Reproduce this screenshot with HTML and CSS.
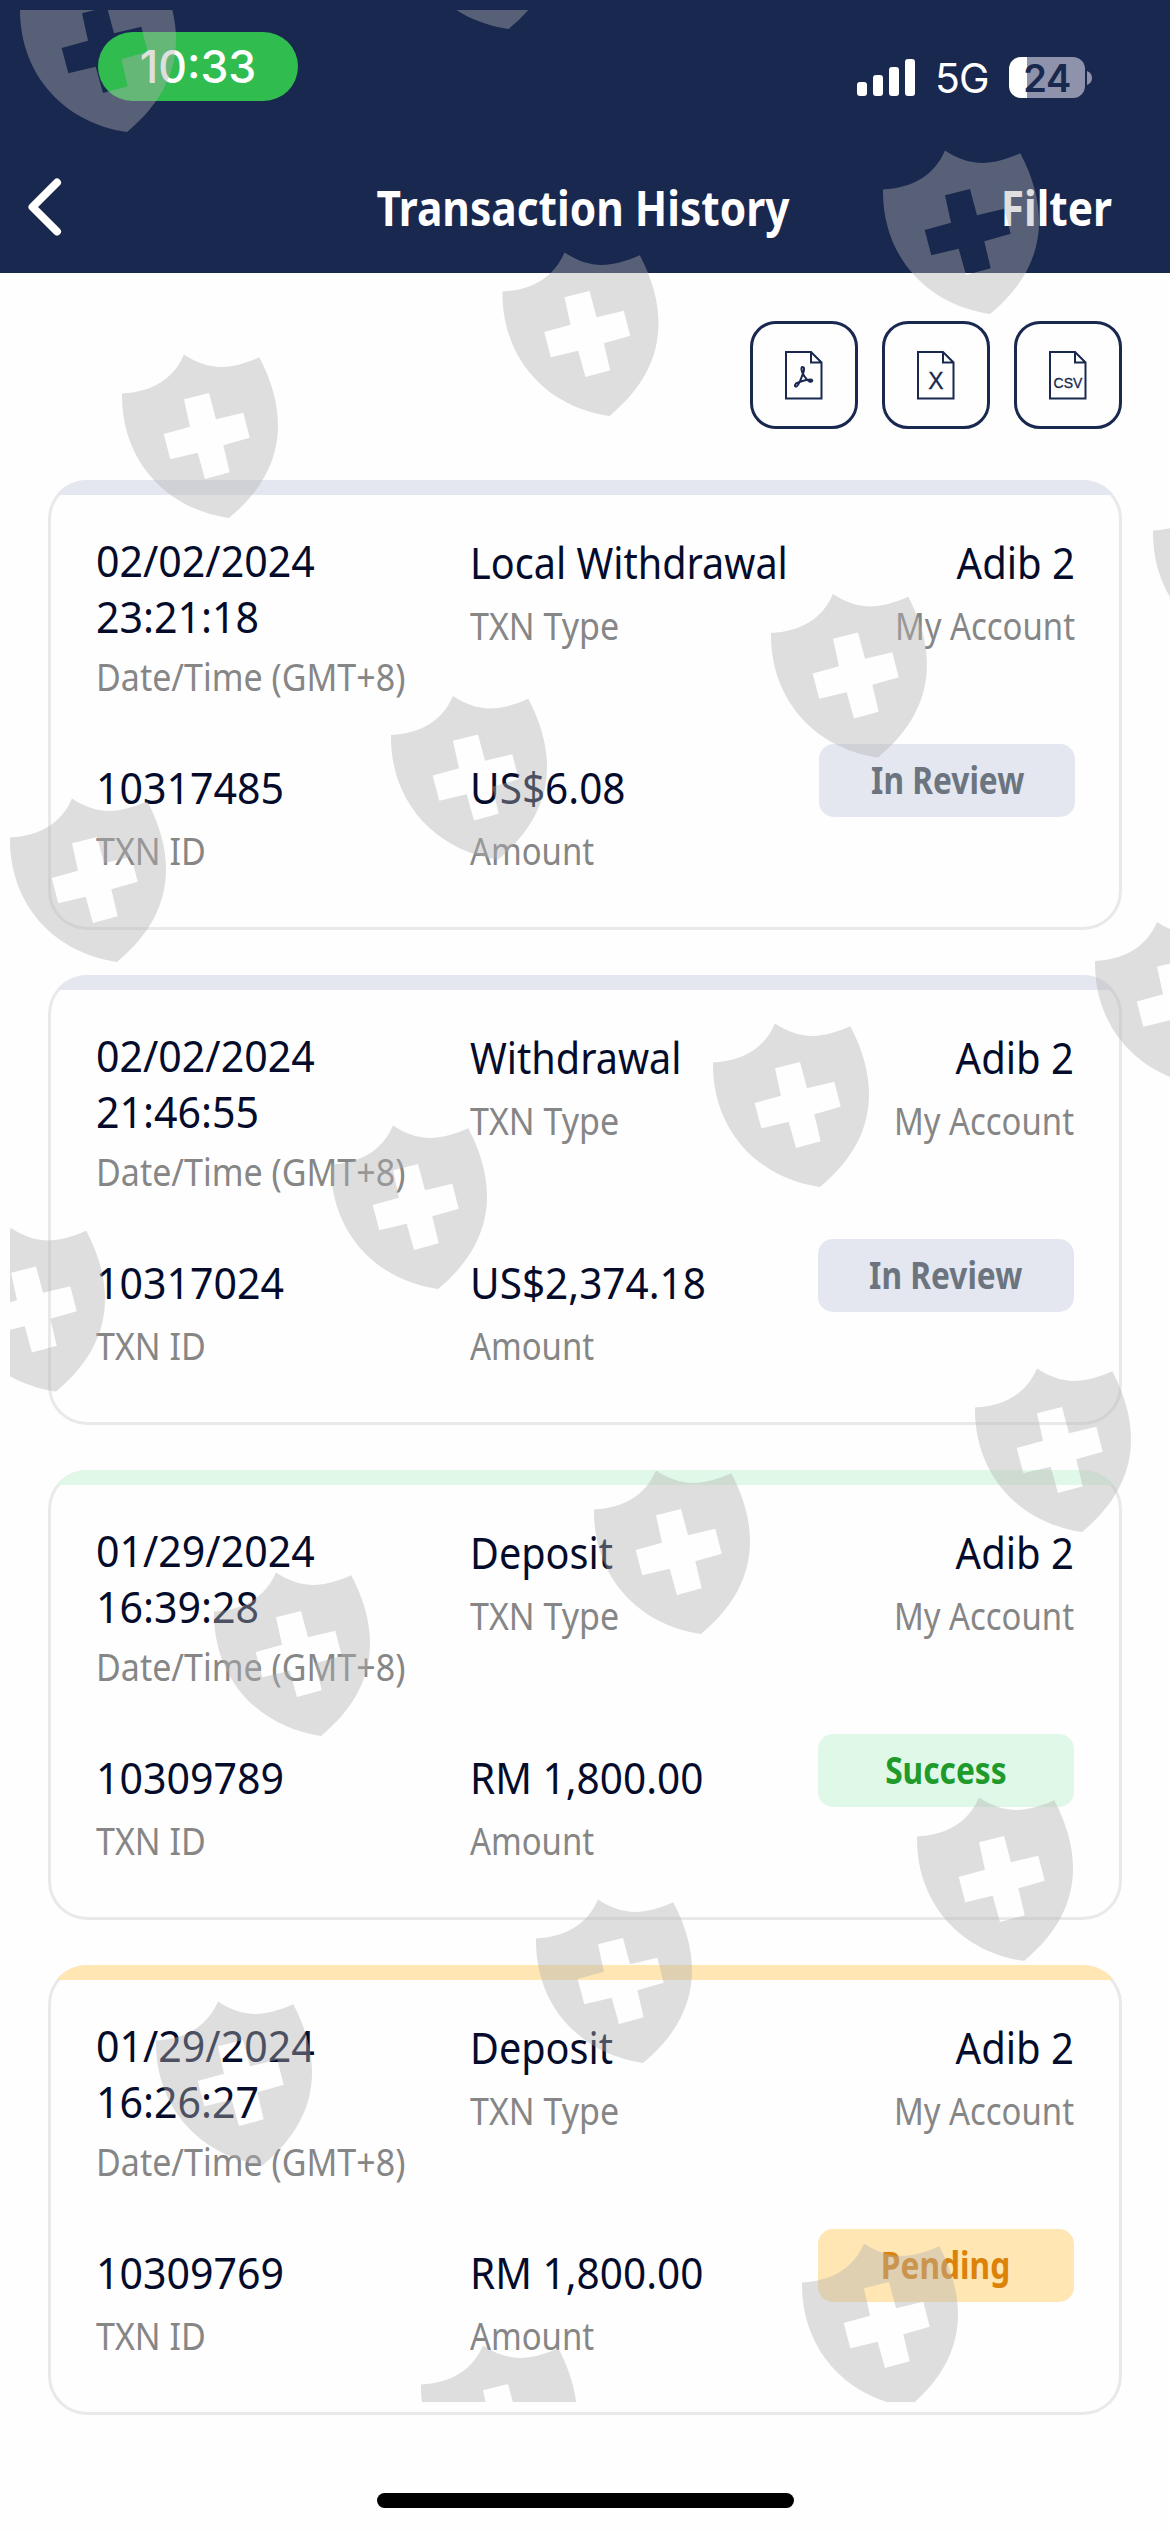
FILE: index.html
```html
<!DOCTYPE html>
<html lang="en">
<head>
    <meta charset="UTF-8">
    <meta name="viewport" content="width=device-width, initial-scale=1.0">
    <title>Transaction History</title>
    <link rel="stylesheet" href="styles.css">
</head>
<body>
    <header class="header">
        <div class="status-bar">
            <div class="time"><span>10:33</span></div>
            <div class="status-icons">
                <svg class="signal" width="58" height="37" viewBox="0 0 58 37" fill="#fff">
                    <rect x="0" y="23" width="10" height="14" rx="3"/>
                    <rect x="16" y="16" width="10" height="21" rx="3"/>
                    <rect x="32" y="8" width="10" height="29" rx="3"/>
                    <rect x="48" y="0" width="10" height="37" rx="3"/>
                </svg>
                <span class="network">5G</span>
                <div class="battery">24</div>
                <svg class="battery-tip" width="5" height="14" viewBox="0 0 5 14"><path d="M0 0Q5 2 5 7Q5 12 0 14Z" fill="#8e93ab"/></svg>
            </div>
        </div>
        <nav class="nav-bar">
            <svg class="back" width="36" height="60" viewBox="0 0 36 60" fill="none" stroke="#fff" stroke-width="8" stroke-linecap="round" stroke-linejoin="round">
                <path d="M30 5.500L5.500 30L30 54.500"/>
            </svg>
            <h1>Transaction History</h1>
            <span class="filter">Filter</span>
        </nav>
    </header>

    <main class="content">
        <div class="exports">
            <button class="export-btn">
                <svg width="38" height="49" viewBox="0 0 38 49" fill="none" stroke="#19284f" stroke-width="2">
                    <path d="M1 1H26L36.500 11.500V47.500H1ZM26 1V11.500H36.500"/>
                    <path d="M17.500 16C19.500 16 19.500 19 18 22.500C16 28 13.500 35 11.500 35.500C9 36 9.500 32.500 13 31.500C17 30 23 28.500 26 28.500C28.500 29 27 31.500 24.500 30.500C20.500 28.500 17 22 16.500 18.500C16.300 17 16.700 16 17.500 16Z"/>
                </svg>
            </button>
            <button class="export-btn">
                <svg width="38" height="49" viewBox="0 0 38 49" fill="none" stroke="#19284f" stroke-width="2">
                    <path d="M1 1H26L36.500 11.500V47.500H1ZM26 1V11.500H36.500"/>
                    <text class="x-text" x="19" y="37.500" text-anchor="middle">X</text>
                </svg>
            </button>
            <button class="export-btn">
                <svg width="38" height="49" viewBox="0 0 38 49" fill="none" stroke="#19284f" stroke-width="2">
                    <path d="M1 1H26L36.500 11.500V47.500H1ZM26 1V11.500H36.500"/>
                    <text class="csv-text" x="19" y="37" text-anchor="middle">CSV</text>
                </svg>
            </button>
        </div>

        <section class="card review">
            <div class="bar"></div>
            <div class="card-body">
                <div class="cell date"><div class="value">02/02/2024<br>23:21:18</div><div class="label">Date/Time (GMT+8)</div></div>
                <div class="cell type"><div class="value">Local Withdrawal</div><div class="label">TXN Type</div></div>
                <div class="cell account"><div class="value">Adib 2</div><div class="label">My Account</div></div>
                <div class="cell"><div class="value">10317485</div><div class="label">TXN ID</div></div>
                <div class="cell amount"><div class="value">US$6.08</div><div class="label">Amount</div></div>
                <div class="badge"><span>In Review</span></div>
            </div>
        </section>

        <section class="card review">
            <div class="bar"></div>
            <div class="card-body">
                <div class="cell date"><div class="value">02/02/2024<br>21:46:55</div><div class="label">Date/Time (GMT+8)</div></div>
                <div class="cell type"><div class="value">Withdrawal</div><div class="label">TXN Type</div></div>
                <div class="cell account"><div class="value">Adib 2</div><div class="label">My Account</div></div>
                <div class="cell"><div class="value">10317024</div><div class="label">TXN ID</div></div>
                <div class="cell amount"><div class="value">US$2,374.18</div><div class="label">Amount</div></div>
                <div class="badge"><span>In Review</span></div>
            </div>
        </section>

        <section class="card success">
            <div class="bar"></div>
            <div class="card-body">
                <div class="cell date"><div class="value">01/29/2024<br>16:39:28</div><div class="label">Date/Time (GMT+8)</div></div>
                <div class="cell type"><div class="value">Deposit</div><div class="label">TXN Type</div></div>
                <div class="cell account"><div class="value">Adib 2</div><div class="label">My Account</div></div>
                <div class="cell"><div class="value">10309789</div><div class="label">TXN ID</div></div>
                <div class="cell amount"><div class="value">RM 1,800.00</div><div class="label">Amount</div></div>
                <div class="badge"><span>Success</span></div>
            </div>
        </section>

        <section class="card pending">
            <div class="bar"></div>
            <div class="card-body">
                <div class="cell date"><div class="value">01/29/2024<br>16:26:27</div><div class="label">Date/Time (GMT+8)</div></div>
                <div class="cell type"><div class="value">Deposit</div><div class="label">TXN Type</div></div>
                <div class="cell account"><div class="value">Adib 2</div><div class="label">My Account</div></div>
                <div class="cell"><div class="value">10309769</div><div class="label">TXN ID</div></div>
                <div class="cell amount"><div class="value">RM 1,800.00</div><div class="label">Amount</div></div>
                <div class="badge"><span>Pending</span></div>
            </div>
        </section>
    </main>

    <div class="home-indicator"></div>

    <!-- shield watermark over the whole screen -->
    <svg class="watermark" viewBox="10 10 1160 2392">
        <defs>
            <path id="shield" fill-rule="evenodd" d="M22 63.500C51 62 73 50 84 24.500C108 40 128 41 159.300 27.300C190 86 185 142 129 188C66 179 21 130 22 63.500ZM84 69.300L109 63L116 89.300L143.300 82.700L149.700 107.700L123.300 115.300L129.700 142.300L105 149L97.700 122.700L70.300 129.300L63.700 104L90 96.700Z"/>
        </defs>
        <use href="#shield" x="-2" y="-56"/>
        <use href="#shield" x="379.500" y="-159"/>
        <use href="#shield" x="861" y="126"/>
        <use href="#shield" x="480.500" y="228"/>
        <use href="#shield" x="100" y="330"/>
        <use href="#shield" x="1131" y="467"/>
        <use href="#shield" x="749" y="569.500"/>
        <use href="#shield" x="369" y="671.500"/>
        <use href="#shield" x="-12" y="774"/>
        <use href="#shield" x="1073" y="897.500"/>
        <use href="#shield" x="691" y="999"/>
        <use href="#shield" x="309" y="1101"/>
        <use href="#shield" x="-73" y="1203.500"/>
        <use href="#shield" x="953" y="1344"/>
        <use href="#shield" x="572" y="1446"/>
        <use href="#shield" x="192" y="1548"/>
        <use href="#shield" x="895" y="1773"/>
        <use href="#shield" x="514" y="1875"/>
        <use href="#shield" x="134" y="1977"/>
        <use href="#shield" x="780" y="2219"/>
        <use href="#shield" x="399" y="2321"/>
    </svg>
</body>
</html>
```

FILE: styles.css
```css
* {
    box-sizing: border-box;
}

body {
    margin: 0;
    position: relative;
    width: 1170px;
    height: 2532px;
    overflow: hidden;
    background: #fefefe;
    font-family: 'Noto Sans', sans-serif;
    color: #050c2b;
    display: flex;
    flex-direction: column;
}

.header {
    height: 273px;
    background: #19284f;
    color: #fff;
}

.status-bar {
    height: 143px;
    padding: 32px 78px 0 98px;
    display: flex;
    justify-content: space-between;
    align-items: flex-start;
    font-family: Inter, sans-serif;
}

.time {
    width: 200px;
    height: 69px;
    border-radius: 35px;
    background: #30bc4f;
    font-size: 44.5px;
    line-height: 70px;
    font-weight: 500;
    text-align: center;
}

.status-icons {
    display: flex;
    align-items: center;
    margin-top: 25px;
    height: 41px;
}

.network {
    width: 56px;
    margin: 2px 18px 0 20px;
    font-size: 41px;
    line-height: 41px;
    letter-spacing: -1px;
}

.battery {
    width: 76px;
    height: 41px;
    border-radius: 12px;
    background: linear-gradient(90deg, #fff 18px, #8e93ab 18px);
    color: #19284f;
    font-size: 38px;
    line-height: 42px;
    font-weight: 600;
    text-align: center;
    letter-spacing: -0.5px;
}

.battery-tip {
    margin-left: 2px;
}

.nav-bar {
    height: 130px;
    padding: 0 58px 2px 27px;
    display: grid;
    grid-template-columns: 200px 1fr 200px;
    align-items: center;
    font-size: 49px;
    font-weight: 700;
}

.nav-bar h1 {
    margin: 0;
    padding-left: 31px;
    font-size: inherit;
    text-align: center;
    white-space: nowrap;
    transform: scaleX(0.866);
}

.filter {
    text-align: right;
    transform: scaleX(0.866);
    transform-origin: right;
}

.content {
    padding: 48px 48px 0;
    display: flex;
    flex-direction: column;
    gap: 45px;
}

.exports {
    display: flex;
    justify-content: flex-end;
    gap: 24px;
    margin-bottom: 6px;
}

.export-btn {
    width: 108px;
    height: 108px;
    padding: 0;
    border: 3px solid #19284f;
    border-radius: 26px;
    background: transparent;
    display: flex;
    justify-content: center;
    align-items: center;
}

.export-btn text {
    fill: #19284f;
    stroke: #19284f;
    stroke-width: 0.3px;
    font-family: 'Liberation Sans', sans-serif;
}

.x-text {
    font-size: 23px;
}

.csv-text {
    font-size: 14px;
}

.card {
    height: 450px;
    border-radius: 39px;
    box-shadow: inset 0 0 0 3px #e9e9eb;
    overflow: hidden;
}

.bar {
    height: 15px;
    background: var(--tint);
}

.card-body {
    padding: 39px 48px 0;
    display: grid;
    grid-template-columns: 374px 1fr auto;
    grid-template-rows: 225px auto;
}

/* text is slightly condensed, --w is the width ratio */
.value {
    font-size: 43.5px;
    line-height: 56px;
    white-space: nowrap;
    transform: scaleX(var(--w, 0.945));
    transform-origin: left;
}

.label {
    margin-top: 10px;
    font-size: 38px;
    line-height: 50px;
    color: #868686;
    white-space: nowrap;
    transform: scaleX(var(--lw, 0.895));
    transform-origin: left;
}

.date {
    margin-top: -2px;
}

.date .label {
    margin-top: 7px;
}

.type {
    --w: 0.91;
}

.amount {
    --w: 0.932;
    --lw: 0.865;
}

.account {
    --w: 0.92;
    --lw: 0.865;
    text-align: right;
}

.account .value,
.account .label {
    transform-origin: right;
}

.badge {
    width: 256px;
    height: 73px;
    margin-top: -15px;
    justify-self: end;
    border-radius: 15px;
    background: var(--tint);
    color: var(--ink);
    font-size: 37.5px;
    line-height: 72px;
    font-weight: 700;
    text-align: center;
}

.badge span {
    display: inline-block;
    transform: scaleX(0.845);
}

.review {
    --tint: #e4e7f0;
    --ink: #6c757f;
}

.success {
    --tint: #e0f8e8;
    --ink: #219a2c;
}

.pending {
    --tint: #ffe6b3;
    --ink: #dc8208;
}

.home-indicator {
    width: 417px;
    height: 15px;
    margin: 78px auto 0;
    border-radius: 8px;
    background: #000;
}

.watermark {
    position: absolute;
    left: 10px;
    top: 10px;
    width: 1160px;
    height: 2392px;
    fill: rgba(177, 177, 177, 0.41);
    pointer-events: none;
}
```
